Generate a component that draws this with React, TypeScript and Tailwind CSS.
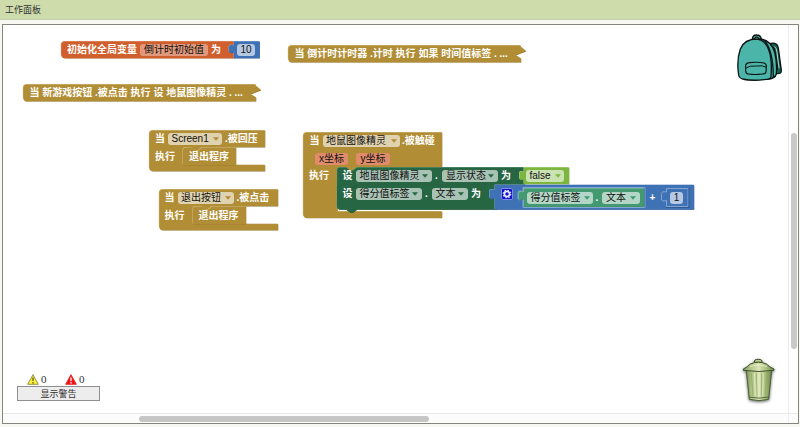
import type { ReactNode } from "react";

const GOLD = "#b18e35";
const GREEN = "#266643";
const GETTER = "#439970";
const LIME = "#7db63f";

type Tone = { fill: string; light: string; dark: string };

const gold: Tone = { fill: GOLD, light: "#d0bb86", dark: "#8a6e27" };
const orange: Tone = { fill: "#d05f2d", light: "#e39a78", dark: "#a44a22" };
const blue: Tone = { fill: "#3f71b5", light: "#83a5d4", dark: "#2c528a" };
const green: Tone = { fill: GREEN, light: "#6d9a80", dark: "#184a2e" };
const getter: Tone = { fill: GETTER, light: "#8fc7ab", dark: "#2d7352" };
const lime: Tone = { fill: LIME, light: "#b3d78a", dark: "#5b8a2a" };

function Shape({ d, fill, light, dark }: Tone & { d: string }) {
  return (
    <g>
      <path d={d} fill={dark} transform="translate(0.3 0.4)" />
      <path d={d} fill={light} transform="translate(-0.5 -0.4)" />
      <path d={d} fill={fill} transform="translate(0 0.1)" />
    </g>
  );
}

function Block({ className, viewBox, shapes, children }: { className: string; viewBox: string; shapes: ReactNode; children: ReactNode }) {
  return (
    <div className={`absolute ${className}`}>
      <svg className="absolute inset-0 h-full w-full overflow-visible" viewBox={viewBox}>
        {shapes}
      </svg>
      <div className="relative flex flex-col items-start">{children}</div>
    </div>
  );
}

function Label({ className = "", children }: { className?: string; children: ReactNode }) {
  return <span className={`block shrink-0 whitespace-pre font-bold text-white ${className}`}>{children}</span>;
}

function Field({ className, arrow, children }: { className: string; arrow?: string; children: ReactNode }) {
  return (
    <span className={`flex h-[12px] shrink-0 items-center rounded-[3px] whitespace-pre leading-[12px] text-[#111] ${className}`}>
      {children}
      {arrow && (
        <svg className="ml-auto h-[4px] w-[6px]" viewBox="0 0 6 4">
          <path d="M0 0.3H6L3 3.8Z" fill={arrow} />
        </svg>
      )}
    </span>
  );
}

function Gear() {
  return (
    <svg className="h-[12px] w-[12px] shrink-0" viewBox="0 0 12 12">
      <rect x="0.5" y="0.5" width="11" height="11" rx="1.5" fill="#1212cc" stroke="#8d9cf0" strokeWidth="0.8" />
      <circle cx="6" cy="6" r="2.6" fill="none" stroke="#e6e9ff" strokeWidth="1.7" />
      <circle cx="6" cy="6" r="3.8" fill="none" stroke="#e6e9ff" strokeWidth="1.1" strokeDasharray="1.5 1.485" />
    </svg>
  );
}

function Backpack() {
  return (
    <svg className="absolute top-[-5px] left-[722px] h-[70px] w-[75px]" viewBox="0 0 225 210" stroke="#0b1514" strokeWidth="4" strokeLinejoin="round" strokeLinecap="round">
      <path d="M137 70Q157 66 160 84L169 151Q170 162 156 161L150 158L158 145L149 90Q147 79 137 80Z" fill="#12604f" />
      <path d="M149 80Q154 82 156 97L162 144" fill="none" stroke="#d6f0e9" strokeWidth="2.5" />
      <path d="M82 56Q84 44 96 45Q107 45 109 58L101 57Q100 51 95 51Q90 51 89 57Z" fill="#4cb5aa" />
      <path d="M104 57Q137 59 149 97Q157 129 154 162Q151 176 126 178L60 179Z" fill="#4cb5aa" />
      <path d="M119 62Q145 94 145 172" fill="none" />
      <path d="M41 165Q34 121 46 87Q58 57 96 57Q119 58 131 89Q142 117 138 170Q137 178 124 178Q84 184 53 177Q42 174 41 165Z" fill="#4cb5aa" />
      <path d="M62 139Q61 130 73 128Q97 125 117 129Q125 131 124 142L123 156Q121 162 112 162Q90 165 70 162Q62 161 62 152Z" fill="#4cb5aa" strokeWidth="3.5" />
      <path d="M63 144Q73 136 94 138Q115 135 124 142" fill="none" strokeWidth="3" />
    </svg>
  );
}

function TrashCan() {
  return (
    <svg className="absolute top-[320px] left-[722px] h-[70px] w-[75px] drop-shadow-[0.5px_1px_1.5px_rgba(0,0,0,0.6)]" viewBox="0 0 225 210">
      <defs>
        <linearGradient id="can" x1="0" x2="1">
          <stop offset="0" stopColor="#7d9560" />
          <stop offset="0.2" stopColor="#adc282" />
          <stop offset="0.5" stopColor="#dbe6b8" />
          <stop offset="0.75" stopColor="#a9be7b" />
          <stop offset="1" stopColor="#69824a" />
        </linearGradient>
      </defs>
      <path d="M64 76H140L131 163Q102 171 73 163Z" fill="url(#can)" stroke="#4b5f38" strokeWidth="3" />
      <path d="M79 84L84 154M94 84L96 154M110 84L109 154M126 84L121 154" stroke="#8ba165" strokeWidth="2" fill="none" />
      <path d="M88 84L91 153M102 84V153M115 84L113 153" stroke="#e9f0cb" strokeWidth="2" fill="none" />
      <path d="M72 156Q102 163 132 156" stroke="#415430" strokeWidth="2.5" fill="none" />
      <path d="M88 52Q86 43 100 43Q113 43 111 52Z" fill="#becf94" stroke="#354725" strokeWidth="3" />
      <path d="M55 72Q67 67 76 57Q100 46 124 57Q134 67 147 72V76Q102 83 55 76Z" fill="url(#can)" stroke="#3f532d" strokeWidth="3" />
      <path d="M75 64Q100 55 126 64" stroke="#e8efc9" strokeWidth="2.5" fill="none" />
    </svg>
  );
}

function WarningIcon({ fill, stroke, mark }: { fill: string; stroke: string; mark: string }) {
  return (
    <svg className="h-[11px] w-[12px] shrink-0" viewBox="0 0 12 11">
      <path d="M6 0.7L11.3 10.3H0.7Z" fill={fill} stroke={stroke} strokeWidth="0.9" strokeLinejoin="round" />
      <path d="M6 3.4V7M6 8.1V9.4" stroke={mark} strokeWidth="1.3" />
    </svg>
  );
}

function CollapsedBlock({ className, text }: { className: string; text: string }) {
  return (
    <Block
      className={`h-[17px] w-[238px] ${className}`}
      viewBox="0 0 238 17"
      shapes={<Shape {...gold} d="M4 0.3H232.5V1.5L238 6L227.5 10L233 13.5V17.2H4Q0.3 17.2 0.3 13V4Q0.3 0.3 4 0.3Z" />}
    >
      <Label className="ml-[6.5px] leading-[17px]">{text}</Label>
    </Block>
  );
}

function ExitBlock({ className, viewBox, w, field, fieldClass, event }: { className: string; viewBox: string; w: number; field: string; fieldClass: string; event: string }) {
  const outer = `M4 0.3H${w}V17H54V21H34V35H${w}V41H4Q0.3 41 0.3 37V4Q0.3 0.3 4 0.3Z`;
  return (
    <Block
      className={`h-[41px] ${className}`}
      viewBox={viewBox}
      shapes={
        <>
          <Shape {...gold} d={outer} />
          <Shape {...gold} d="M37 17.4H43L47 20.6H49L53 17.4H87V34.8H34V20.4Q34 17.4 37 17.4Z" />
        </>
      }
    >
      <div className="flex h-[18px] items-center">
        <Label className="ml-[6px] w-[13px]">当</Label>
        <Field className={`bg-[#e0d2ae] pr-[3px] pl-[3.5px] ${fieldClass}`} arrow={GOLD}>{field}</Field>
        <Label className="ml-[3px]">{event}</Label>
      </div>
      <div className="flex h-[17px] items-center">
        <Label className="ml-[6px] w-[34px]">执行</Label>
        <Label>退出程序</Label>
      </div>
    </Block>
  );
}

function TouchedBlock() {
  return (
    <Block
      className="top-[107px] left-[300px] h-[86px] w-[392px]"
      viewBox="303 132 392 86"
      shapes={
        <>
          <Shape {...gold} d="M307 132.3H442V167H360V172H337.3V211.5H442V217.8H307Q303.3 217.8 303.3 214V136Q303.3 132.3 307 132.3Z" />
          <Shape {...green} d="M337 185H497V209.3H357L353 212.3H350L346 209.3H340Q337 209.3 337 206Z" />
          <Shape {...green} d="M340 167.3H346L350 170.3H353L357 167.3H525V184.6H357L353 187.6H350L346 184.6H337.2V170Q337.2 167.3 340 167.3Z" />
          <Shape {...lime} d="M524 167.5H569V184H524V179Q519.5 181 519.5 178V173.5Q519.5 170.5 524 172Z" />
          <Shape {...blue} d="M495 185H694V209.3H495V198Q489.5 200 489.5 197V191.5Q489.5 188.5 495 190Z" />
          <g fill="none" stroke="#83a5d4">
            <path d="M523 187.5H645V207.5H523V199Q518 201 518 198V193Q518 190 523 191.5Z" />
            <path d="M666.5 188.5H688V206.5H666.5V200.5Q661.5 202 661.5 199V193.5Q661.5 191 666.5 192Z" />
          </g>
          <path d="M689 188.5V207.5H666" fill="none" stroke="#2c528a" strokeWidth="0.8" />
          <Shape {...getter} d="M524 188.5H644V206.7H524V199Q519 201 519 198V193.5Q519 190.5 524 192Z" />
        </>
      }
    >
      <div className="flex h-[18px] items-center">
        <Label className="ml-[6.5px] w-[13.5px]">当</Label>
        <Field className="w-[77px] bg-[#e0d2ae] pr-[3px] pl-[3px]" arrow={GOLD}>地鼠图像精灵</Field>
        <Label className="ml-[2px]">.被触碰</Label>
      </div>
      <div className="flex h-[17px] items-center">
        <Field className="ml-[12px] w-[33px] justify-center bg-[#e08c6c]">x坐标</Field>
        <Field className="ml-[8px] w-[34px] justify-center bg-[#e08c6c]">y坐标</Field>
      </div>
      <div className="flex">
        <Label className="ml-[6px] h-[17px] w-[33.5px] leading-[17px]">执行</Label>
        <div className="flex flex-col">
          <div className="flex h-[18px] items-center">
            <Label className="w-[13.5px]">设</Label>
            <Field className="w-[76px] bg-[#a8c2b4] pr-[4px] pl-[3.5px]" arrow={GREEN}>地鼠图像精灵</Field>
            <Label className="w-[10px] pl-[3px]">.</Label>
            <Field className="w-[56px] bg-[#a8c2b4] pr-[4px] pl-[4px]" arrow={GREEN}>显示状态</Field>
            <Label className="ml-[3px] w-[24.5px]">为</Label>
            <Field className="w-[38px] bg-[#cbe2b2] pr-[3px] pl-[4px]" arrow={LIME}>false</Field>
          </div>
          <div className="flex h-[24px] items-start pt-[3px]">
            <Label className="w-[13.5px] leading-[12px]">设</Label>
            <Field className="w-[66px] bg-[#a8c2b4] pr-[4px] pl-[3.5px]" arrow={GREEN}>得分值标签</Field>
            <Label className="w-[9.5px] pl-[3px] leading-[12px]">.</Label>
            <Field className="w-[36.5px] bg-[#a8c2b4] pr-[4px] pl-[4px]" arrow={GREEN}>文本</Field>
            <Label className="ml-[3px] w-[29.5px] leading-[12px]">为</Label>
            <Gear />
            <div className="mt-[3.5px] ml-[14.5px] flex items-center">
              <Field className="w-[65.5px] bg-[#b4d6c6] pr-[3px] pl-[3.5px]" arrow={GETTER}>得分值标签</Field>
              <Label className="w-[9.5px] pl-[3px] leading-[12px]">.</Label>
              <Field className="w-[37.5px] bg-[#b4d6c6] pr-[4px] pl-[4px]" arrow={GETTER}>文本</Field>
              <Label className="w-[30.5px] pl-[10px] leading-[12px]">+</Label>
              <Field className="w-[13px] justify-center bg-[#b5c8e4]">1</Field>
            </div>
          </div>
        </div>
      </div>
    </Block>
  );
}

export default function App() {
  return (
    <div className="flex h-[427px] w-[800px] flex-col overflow-hidden bg-[#f8f8f2] font-['Liberation_Sans','Noto_Sans_CJK_SC',sans-serif] text-[10px] leading-[12px]">
      <header className="flex h-[20px] shrink-0 items-center border-b border-[#c3cdb0] bg-[#cedcab] pl-[5px] text-[9px] text-[#333]">工作面板</header>
      <main className="mt-[4px] ml-[2px] flex h-[400px] w-[797px] flex-col border border-[#858580] bg-white">
        <div className="flex min-h-0 flex-1">
          <div className="relative h-full w-[785px]">
            <Block
              className="top-[16px] left-[57.5px] h-[17px] w-[199px]"
              viewBox="60.5 41 199 17"
              shapes={
                <>
                  <Shape {...orange} d="M64.5 41.3H234V58H64.5Q60.8 58 60.8 54V45Q60.8 41.3 64.5 41.3Z" />
                  <Shape {...blue} d="M233.5 41.3H259V58H233.5V52Q228.5 54 228.5 51V47Q228.5 44 233.5 45.5Z" />
                </>
              }
            >
              <div className="flex h-[18px] items-center">
                <Label className="ml-[6.5px] w-[73px]">初始化全局变量</Label>
                <Field className="w-[68px] justify-center bg-[#e2997b]">倒计时初始值</Field>
                <Label className="ml-[3px] w-[26px]">为</Label>
                <Field className="w-[18px] justify-center bg-[#b5c8e4]">10</Field>
              </div>
            </Block>
            <CollapsedBlock className="top-[20px] left-[285px]" text="当 倒计时计时器 .计时 执行 如果 时间值标签 . ..." />
            <CollapsedBlock className="top-[59px] left-[20px]" text="当 新游戏按钮 .被点击 执行 设 地鼠图像精灵 . ..." />
            <ExitBlock className="top-[105px] left-[146px] w-[116px]" viewBox="0 0 116 41" w={116} field="Screen1" fieldClass="w-[54px]" event=".被回压" />
            <ExitBlock className="top-[164px] left-[155.5px] w-[119px]" viewBox="0 0 119 41" w={119} field="退出按钮" fieldClass="w-[56px]" event=".被点击" />
            <TouchedBlock />
            <Backpack />
            <TrashCan />
            <div className="absolute top-[347px] left-[14px] flex w-[83px] flex-col">
              <div className="flex h-[14px] items-center pl-[10px] font-['Liberation_Serif',serif] text-[11px] text-[#333]">
                <WarningIcon fill="#fbf23a" stroke="#8c8538" mark="#5c5722" />
                <span className="ml-[2px] w-[24px]">0</span>
                <WarningIcon fill="#f31212" stroke="#e42222" mark="#ffffff" />
                <span className="ml-[2px]">0</span>
              </div>
              <button className="flex h-[15px] w-[83px] items-center justify-center border border-[#8f8f8f] bg-[#ededed] font-['Liberation_Serif','Noto_Sans_CJK_SC',serif] text-[9px] leading-[12px] text-[#333]">显示警告</button>
            </div>
          </div>
          <div className="flex w-[10px] justify-center border-l border-[#ececec] pt-[108px]">
            <div className="h-[216px] w-[6px] rounded-full bg-[#c9c9c9]" />
          </div>
        </div>
        <div className="flex h-[10px] shrink-0 items-center border-t border-[#e8e8e8] bg-[#fcfcfc] pl-[136px]">
          <div className="h-[6px] w-[290px] rounded-full bg-[#c6c6c6]" />
          <div className="ml-auto h-full w-[10px] border-l border-[#ececec]" />
        </div>
      </main>
    </div>
  );
}
